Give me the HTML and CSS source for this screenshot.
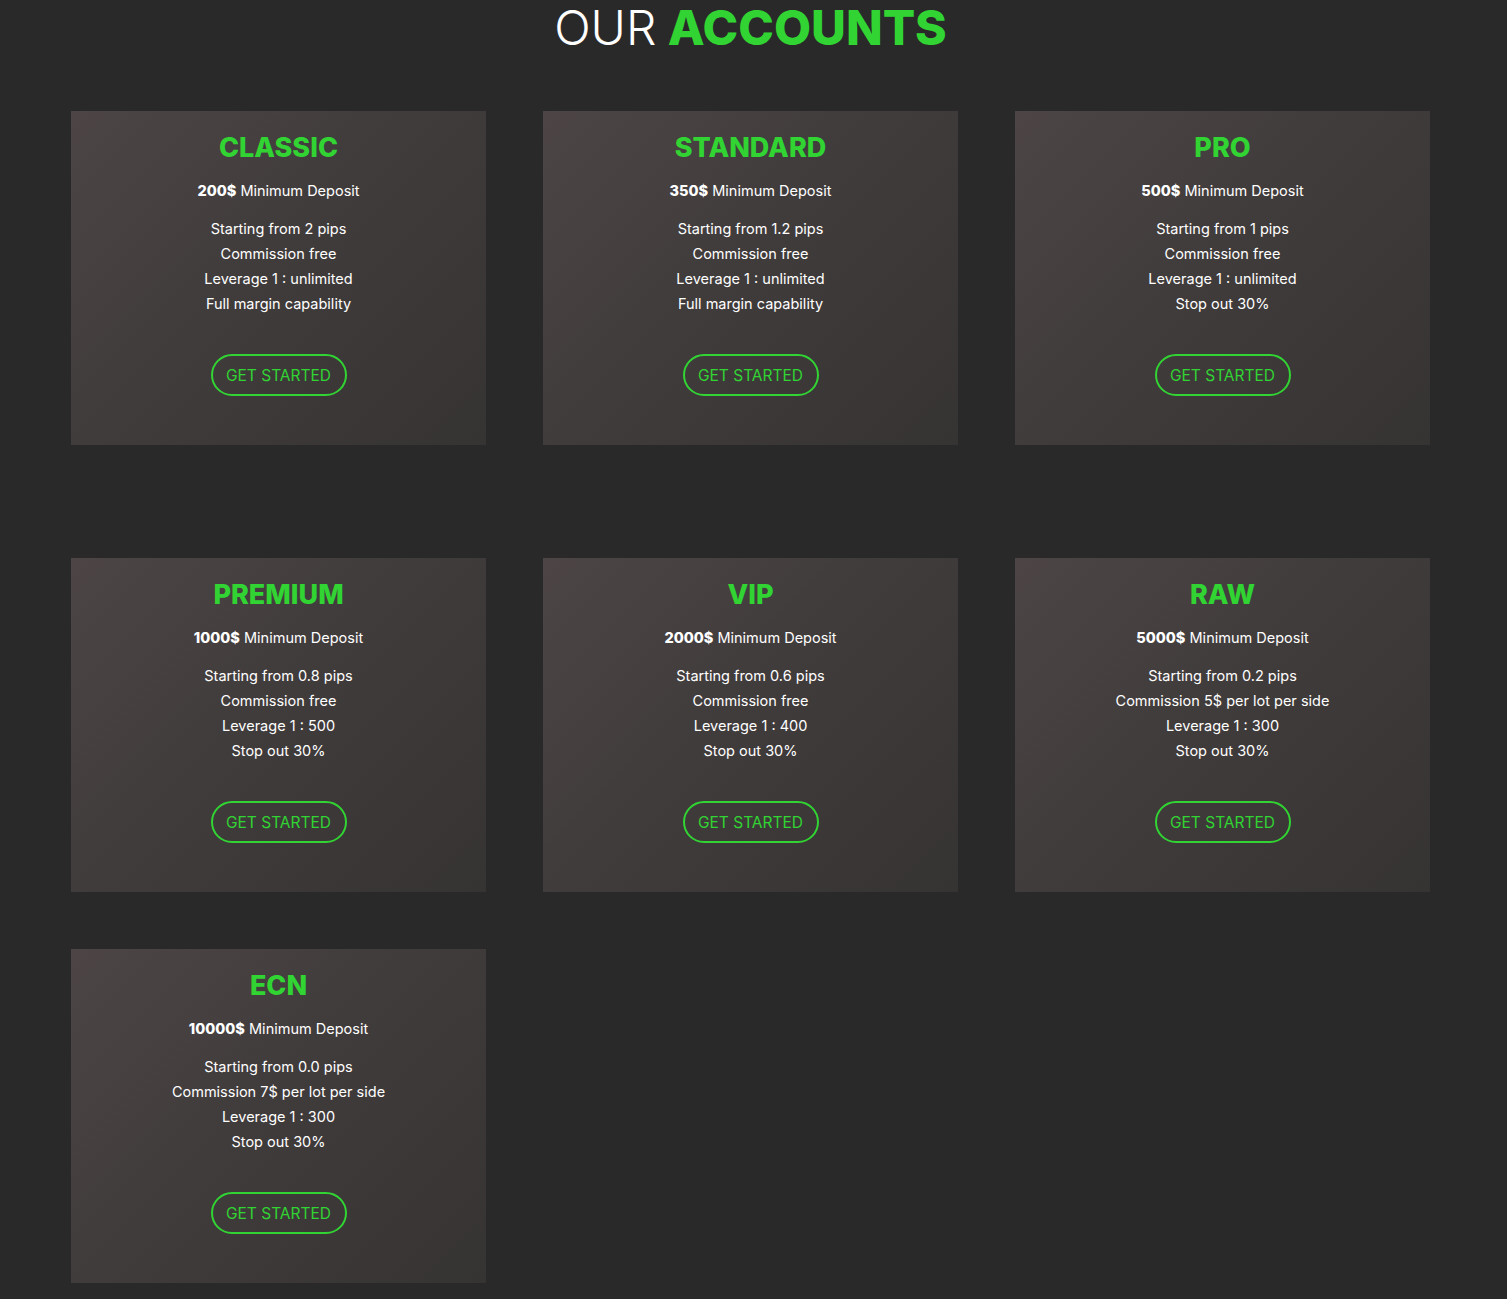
FILE: index.html
```html
<!DOCTYPE html>
<html lang="en">
<head>
<meta charset="utf-8">
<title>Our Accounts</title>
<link rel="stylesheet" href="styles.css">
</head>
<body>
<section class="accounts">
  <h1 class="heading"><span class="light">OUR</span> <span class="accent">ACCOUNTS</span></h1>
  <div class="grid grid-first">
    <div class="card">
      <h2 class="card-title">CLASSIC</h2>
      <p class="deposit"><b>200$</b> Minimum Deposit</p>
      <ul class="features">
        <li>Starting from 2 pips</li>
        <li>Commission free</li>
        <li>Leverage 1 : unlimited</li>
        <li>Full margin capability</li>
      </ul>
      <a class="btn" href="#">GET STARTED</a>
    </div>
    <div class="card">
      <h2 class="card-title">STANDARD</h2>
      <p class="deposit"><b>350$</b> Minimum Deposit</p>
      <ul class="features">
        <li>Starting from 1.2 pips</li>
        <li>Commission free</li>
        <li>Leverage 1 : unlimited</li>
        <li>Full margin capability</li>
      </ul>
      <a class="btn" href="#">GET STARTED</a>
    </div>
    <div class="card">
      <h2 class="card-title">PRO</h2>
      <p class="deposit"><b>500$</b> Minimum Deposit</p>
      <ul class="features">
        <li>Starting from 1 pips</li>
        <li>Commission free</li>
        <li>Leverage 1 : unlimited</li>
        <li>Stop out 30%</li>
      </ul>
      <a class="btn" href="#">GET STARTED</a>
    </div>
  </div>
  <div class="grid">
    <div class="card">
      <h2 class="card-title">PREMIUM</h2>
      <p class="deposit"><b>1000$</b> Minimum Deposit</p>
      <ul class="features">
        <li>Starting from 0.8 pips</li>
        <li>Commission free</li>
        <li>Leverage 1 : 500</li>
        <li>Stop out 30%</li>
      </ul>
      <a class="btn" href="#">GET STARTED</a>
    </div>
    <div class="card">
      <h2 class="card-title">VIP</h2>
      <p class="deposit"><b>2000$</b> Minimum Deposit</p>
      <ul class="features">
        <li>Starting from 0.6 pips</li>
        <li>Commission free</li>
        <li>Leverage 1 : 400</li>
        <li>Stop out 30%</li>
      </ul>
      <a class="btn" href="#">GET STARTED</a>
    </div>
    <div class="card">
      <h2 class="card-title">RAW</h2>
      <p class="deposit"><b>5000$</b> Minimum Deposit</p>
      <ul class="features">
        <li>Starting from 0.2 pips</li>
        <li>Commission 5$ per lot per side</li>
        <li>Leverage 1 : 300</li>
        <li>Stop out 30%</li>
      </ul>
      <a class="btn" href="#">GET STARTED</a>
    </div>
    <div class="card">
      <h2 class="card-title">ECN</h2>
      <p class="deposit"><b>10000$</b> Minimum Deposit</p>
      <ul class="features">
        <li>Starting from 0.0 pips</li>
        <li>Commission 7$ per lot per side</li>
        <li>Leverage 1 : 300</li>
        <li>Stop out 30%</li>
      </ul>
      <a class="btn" href="#">GET STARTED</a>
    </div>
  </div>
</section>
</body>
</html>
```
FILE: styles.css
```css
* { box-sizing: border-box; }
html, body {
  margin: 0;
  padding: 0;
  background: #2a2929;
}
body {
  font-family: Inter, "Noto Sans", "Liberation Sans", sans-serif;
  color: #ffffff;
  min-height: 1299px;
}
.accounts {
  padding: 0 77px 16px 71px;
}
.heading {
  margin: 0;
  height: 111px;
  padding-top: 2px;
  text-align: center;
  font-size: 48px;
  line-height: 52px;
  letter-spacing: 0;
}
.heading .light {
  font-weight: 300;
  color: #ffffff;
}
.heading .accent {
  font-weight: 800;
  color: #31d432;
}
.grid {
  display: grid;
  grid-template-columns: repeat(3, 415px);
  column-gap: 57px;
  row-gap: 57px;
}
.grid-first {
  margin-bottom: 113px;
}
.card {
  height: 334px;
  display: flex;
  flex-direction: column;
  align-items: center;
  padding-top: 20px;
  background: linear-gradient(135deg, #4d4545 0%, #423d3d 40%, #363333 100%);
  text-align: center;
}
.card-title {
  margin: 0;
  font-size: 27px;
  line-height: 34px;
  font-weight: 800;
  color: #31d432;
}
.deposit {
  margin: 16px 0 0;
  font-size: 14.5px;
  line-height: 20px;
  font-weight: 400;
}
.deposit b {
  font-weight: 800;
}
.features {
  list-style: none;
  margin: 15px 0 0;
  padding: 0;
  font-size: 14.5px;
  line-height: 25px;
}
.btn {
  margin-top: 38px;
  display: inline-flex;
  align-items: center;
  justify-content: center;
  width: 136px;
  height: 42px;
  border: 2px solid #31d432;
  border-radius: 21px;
  color: #31d432;
  text-decoration: none;
  font-size: 15.5px;
  font-weight: 400;
}
```
